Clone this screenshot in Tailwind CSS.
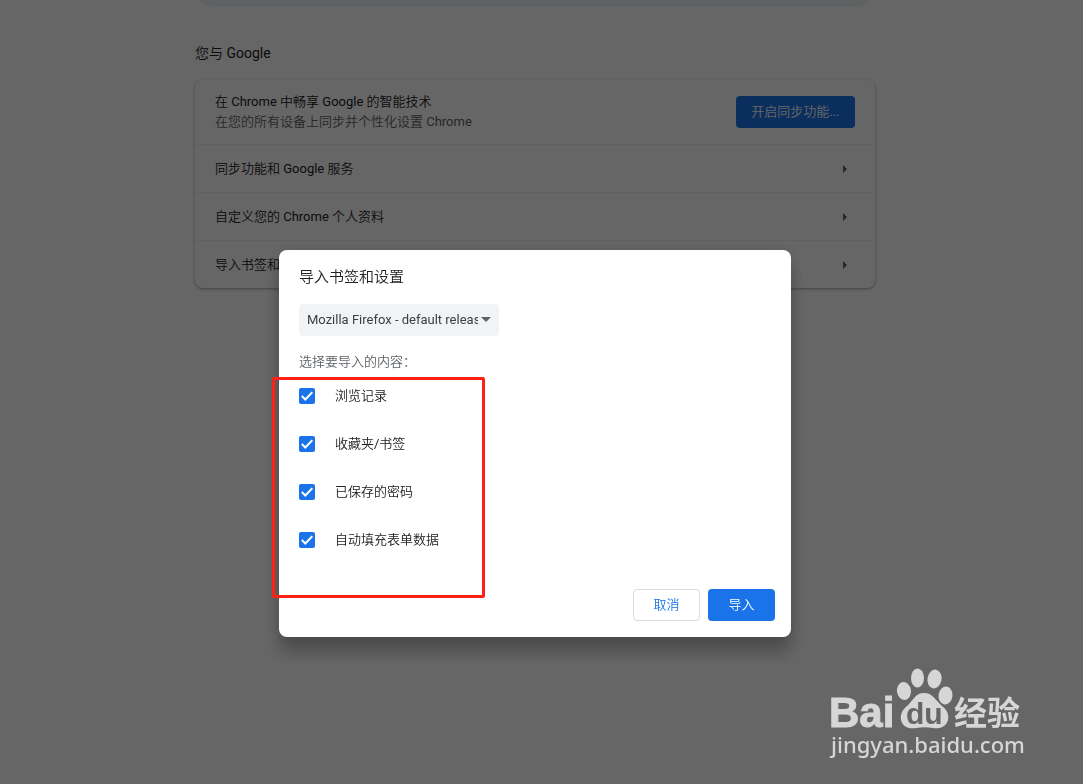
<!DOCTYPE html>
<html lang="zh-CN">
<head>
    <meta charset="UTF-8">
    <meta name="viewport" content="width=device-width, initial-scale=1.0">
    <title>设置</title>
    <script src="https://cdn.jsdelivr.net/npm/@tailwindcss/browser@4"></script>
</head>
<body class="min-h-screen bg-white font-[Roboto,'Noto_Sans_CJK_SC_DemiLight','Noto_Sans_CJK_SC',sans-serif] text-[13px] leading-5 text-[#202124]">
    <!-- Settings page -->
    <main class="pr-[13px]">
        <div class="mx-auto max-w-[680px]">
            <div class="h-[7px] overflow-hidden">
                <div class="-mt-[33px] h-10 rounded-[20px] bg-[#f1f3f4]"></div>
            </div>
            <h2 class="mt-9 text-sm leading-5">您与 Google</h2>
            <section class="mt-[17px] rounded-lg bg-white shadow-[0_1px_2px_rgba(60,64,67,0.3),0_1px_3px_1px_rgba(60,64,67,0.15)]">
                <div class="flex h-16 items-center justify-between px-5">
                    <div>
                        <p>在 Chrome 中畅享 Google 的智能技术</p>
                        <p class="text-[#5f6368]">在您的所有设备上同步并个性化设置 Chrome</p>
                    </div>
                    <button type="button" class="h-8 w-[119px] rounded bg-[#1a73e8] text-white">开启同步功能...</button>
                </div>
                <a href="#sync" class="flex h-12 items-center justify-between border-t border-black/6 pl-5 pr-7">
                    同步功能和 Google 服务
                    <svg class="h-2 w-1 fill-[#5f6368]" viewBox="0 0 4 8"><path d="M0 0l4 4-4 4z"/></svg>
                </a>
                <a href="#profile" class="flex h-12 items-center justify-between border-t border-black/6 pl-5 pr-7">
                    自定义您的 Chrome 个人资料
                    <svg class="h-2 w-1 fill-[#5f6368]" viewBox="0 0 4 8"><path d="M0 0l4 4-4 4z"/></svg>
                </a>
                <a href="#import" class="flex h-12 items-center justify-between border-t border-black/6 pl-5 pr-7">
                    导入书签和设置
                    <svg class="h-2 w-1 fill-[#5f6368]" viewBox="0 0 4 8"><path d="M0 0l4 4-4 4z"/></svg>
                </a>
            </section>
        </div>
    </main>

    <!-- Import dialog -->
    <div class="fixed inset-0 bg-black/60 pt-[250px] pr-[13px]">
        <form role="dialog" aria-labelledby="title" class="mx-auto max-w-[512px] rounded-lg bg-white px-5 pt-4 pb-4 shadow-[0_0_16px_rgba(0,0,0,0.12),0_16px_16px_rgba(0,0,0,0.24)]">
            <h1 id="title" class="text-[15px] leading-[22px]">导入书签和设置</h1>
            <div class="relative mt-4 w-[200px]">
                <select aria-label="来源" class="block h-8 w-full appearance-none overflow-hidden rounded bg-[#f1f3f4] pl-2 pr-[21px] text-[#3c4043]">
                    <option>Mozilla Firefox - default release</option>
                </select>
                <svg class="pointer-events-none absolute top-[13px] right-2 h-[5px] w-[10px] fill-[#5f6368]" viewBox="0 0 10 5"><path d="M0 0h10L5 5z"/></svg>
            </div>
            <fieldset class="relative mt-4">
                <legend class="leading-5 text-[#5f6368]">选择要导入的内容：</legend>
                <label class="flex h-12 items-center gap-5">
                    <span class="grid size-4">
                        <input type="checkbox" checked class="col-start-1 row-start-1 size-4 appearance-none rounded-xs bg-[#1a73e8]">
                        <svg class="pointer-events-none col-start-1 row-start-1 size-4 fill-none stroke-white stroke-2" viewBox="0 0 16 16"><path d="M2.800 8l3.500 3.500 7-7.300"/></svg>
                    </span>
                    浏览记录
                </label>
                <label class="flex h-12 items-center gap-5">
                    <span class="grid size-4">
                        <input type="checkbox" checked class="col-start-1 row-start-1 size-4 appearance-none rounded-xs bg-[#1a73e8]">
                        <svg class="pointer-events-none col-start-1 row-start-1 size-4 fill-none stroke-white stroke-2" viewBox="0 0 16 16"><path d="M2.800 8l3.500 3.500 7-7.300"/></svg>
                    </span>
                    收藏夹/书签
                </label>
                <label class="flex h-12 items-center gap-5">
                    <span class="grid size-4">
                        <input type="checkbox" checked class="col-start-1 row-start-1 size-4 appearance-none rounded-xs bg-[#1a73e8]">
                        <svg class="pointer-events-none col-start-1 row-start-1 size-4 fill-none stroke-white stroke-2" viewBox="0 0 16 16"><path d="M2.800 8l3.500 3.500 7-7.300"/></svg>
                    </span>
                    已保存的密码
                </label>
                <label class="flex h-12 items-center gap-5">
                    <span class="grid size-4">
                        <input type="checkbox" checked class="col-start-1 row-start-1 size-4 appearance-none rounded-xs bg-[#1a73e8]">
                        <svg class="pointer-events-none col-start-1 row-start-1 size-4 fill-none stroke-white stroke-2" viewBox="0 0 16 16"><path d="M2.800 8l3.500 3.500 7-7.300"/></svg>
                    </span>
                    自动填充表单数据
                </label>
                <!-- Red highlight around the options -->
                <div class="pointer-events-none absolute top-[5px] -left-[27px] h-[221px] w-[213px] rounded-xs border-3 border-[#ff1f14]"></div>
            </fieldset>
            <div class="-mr-1 mt-[25px] flex justify-end gap-2">
                <button type="button" class="h-8 w-[67px] rounded border border-[#dadce0] text-[#1a73e8]">取消</button>
                <button type="submit" class="h-8 w-[67px] rounded bg-[#1a73e8] text-white">导入</button>
            </div>
        </form>
    </div>

    <!-- Watermark -->
    <svg class="fixed right-[53px] bottom-[19px] h-[100px] w-[205px] fill-[#d6d6d6]" viewBox="0 0 205 100" role="img" aria-label="Baidu 经验">
        <text x="4" y="62" class="stroke-[#d6d6d6] font-['Liberation_Sans'] text-[42px] font-bold">Bai</text>
        <ellipse cx="79" cy="26" rx="7" ry="9" transform="rotate(-8 79 26)"/>
        <ellipse cx="92.500" cy="13" rx="6.500" ry="9.500"/>
        <ellipse cx="109.500" cy="14" rx="7" ry="9.500" transform="rotate(10 109.500 14)"/>
        <ellipse cx="120.500" cy="30.500" rx="7" ry="9" transform="rotate(8 120.500 30.500)"/>
        <path d="M99 28c-9 0-11 8-17 13-5 4-7 9-6 14 2 8 9 9 15 8 6-1 11-1 17 0 7 1 13-1 15-8 1-6-1-10-6-14-6-5-9-13-18-13z"/>
        <text x="81" y="59" class="fill-[#666666] font-['Liberation_Sans'] text-[30px] font-bold">du</text>
        <text x="129" y="60" class="font-['Noto_Sans_CJK_SC'] text-[33px] font-bold">经验</text>
        <text x="6" y="88" class="font-['Noto_Sans'] text-[22px] font-medium">jingyan.baidu.com</text>
    </svg>
</body>
</html>
